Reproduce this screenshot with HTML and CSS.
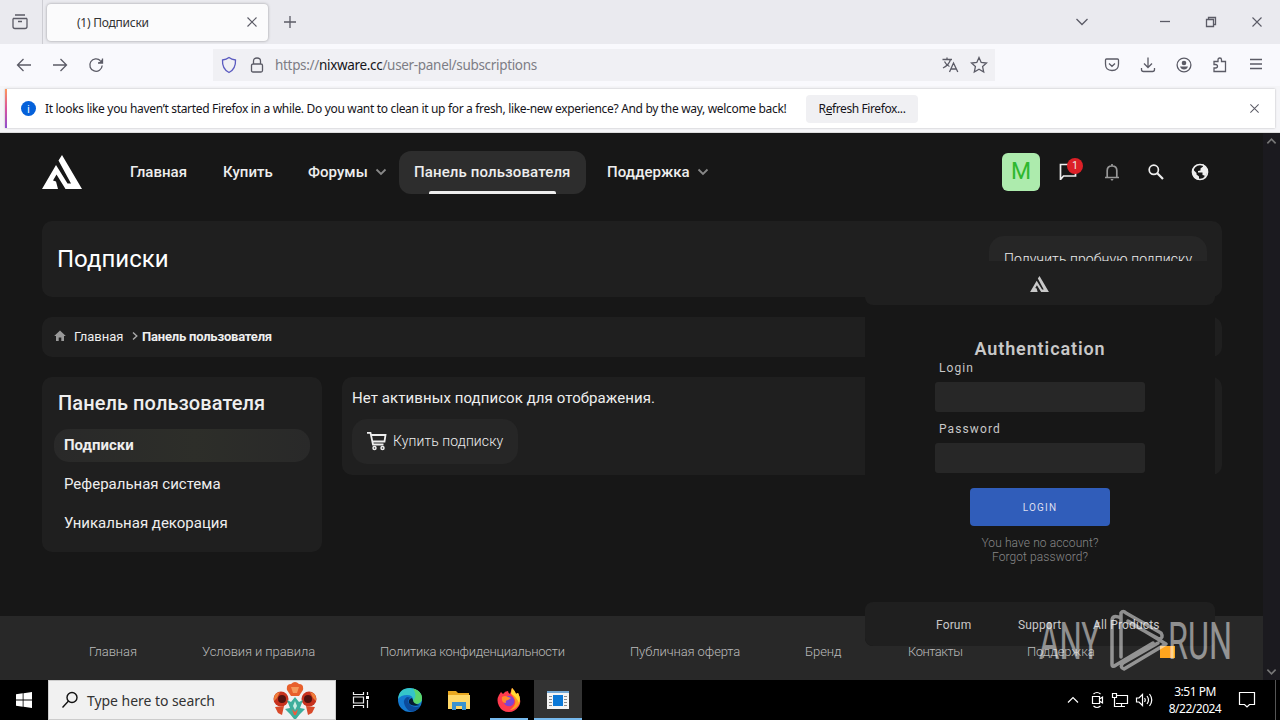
FILE: index.html
```html
<!DOCTYPE html>
<html lang="ru">
<head>
    <meta charset="UTF-8">
    <meta name="viewport" content="width=device-width, initial-scale=1.0">
    <title>(1) Подписки</title>
    <link rel="stylesheet" href="styles.css">
</head>
<body>
    <svg class="defs" width="0" height="0">
        <symbol id="logo" viewBox="0 0 40 34">
            <path fill="currentColor" d="M0 34L14 10L25.500 28.500H29L16.500 5.500L20 0L40 34H23.500L14.500 19.500L11 25.500L14 26.500L16 34Z"/>
        </symbol>
        <symbol id="chevron" viewBox="0 0 12 8">
            <path fill="none" stroke="currentColor" stroke-width="1.800" d="M1.500 1.500L6 6L10.500 1.500"/>
        </symbol>
        <symbol id="cross" viewBox="0 0 12 12">
            <path fill="none" stroke="currentColor" stroke-width="1.100" d="M1.500 1.500L10.500 10.500M10.500 1.500L1.500 10.500"/>
        </symbol>
    </svg>

    <!-- Browser -->
    <div class="tabbar">
        <div class="tab-view">
            <svg width="18" height="18" viewBox="0 0 18 18"><path d="M4 2H14M2 5.500H16M2 5.500V13.500Q2 15.500 4 15.500H14Q16 15.500 16 13.500V5.500M7 8.500H11"/></svg>
        </div>
        <div class="tab">
            <span class="tab-title">(1) Подписки</span>
            <svg width="12" height="12"><use href="#cross"/></svg>
        </div>
        <svg class="new-tab" width="14" height="14" viewBox="0 0 14 14"><path d="M7 1V13M1 7H13"/></svg>
        <div class="window-buttons">
            <svg class="tabs-list" width="14" height="8" viewBox="0 0 14 8"><path d="M1.500 1L7 6.500L12.500 1"/></svg>
            <svg width="12" height="12" viewBox="0 0 12 12"><path d="M1 5.500H11"/></svg>
            <svg width="12" height="12" viewBox="0 0 12 12"><path d="M1.500 3.500H8.500V10.500H1.500ZM3.500 3.500V1.500H10.500V8.500H8.500"/></svg>
            <svg width="12" height="12"><use href="#cross"/></svg>
        </div>
    </div>

    <div class="toolbar">
        <div class="nav-buttons">
            <svg width="18" height="16" viewBox="0 0 18 16"><path d="M16 8H2.500M8.500 2L2.500 8L8.500 14"/></svg>
            <svg width="18" height="16" viewBox="0 0 18 16"><path d="M2 8H15.500M9.500 2L15.500 8L9.500 14"/></svg>
            <svg width="18" height="16" viewBox="0 0 18 16"><path d="M15.200 8.500A6.200 6.200 0 1 1 13.500 3.800M15.500 1.500V6H11"/><path class="solid" d="M15.500 2V6H11.500Z"/></svg>
        </div>
        <div class="urlbar">
            <svg class="shield" width="16" height="18" viewBox="0 0 16 18"><path d="M8 1.500Q10.500 3.500 14.500 4Q15 13 8 16.500Q1 13 1.500 4Q5.500 3.500 8 1.500Z"/></svg>
            <svg class="lock" width="14" height="18" viewBox="0 0 14 18"><path d="M3.500 8V5Q3.500 2 7 2Q10.500 2 10.500 5V8M3 8H11Q12.500 8 12.500 9.500V14.500Q12.500 16 11 16H3Q1.500 16 1.500 14.500V9.500Q1.500 8 3 8Z"/></svg>
            <span class="url">https://<b>nixware.cc</b>/user-panel/subscriptions</span>
            <svg class="translate" width="17" height="16" viewBox="0 0 17 16"><path d="M0.500 2.500H10M5 0.500V2.500M8.500 2.500Q7 8 1 11M2.500 4.500Q4.500 8.500 7.500 9.500M7.500 15L11.500 6L15.800 15M9 12H14.500"/></svg>
            <svg width="18" height="18" viewBox="0 0 18 18"><path d="M9 1.500L11.200 6.400L16.500 7L12.600 10.600L13.700 16L9 13.300L4.300 16L5.400 10.600L1.500 7L6.800 6.400Z"/></svg>
        </div>
        <div class="tool-buttons">
            <svg width="16" height="16" viewBox="0 0 16 16"><path d="M2.500 2H13.500Q14.500 2 14.500 3V7Q14.500 13.500 8 13.500Q1.500 13.500 1.500 7V3Q1.500 2 2.500 2ZM5 6.500L8 9.300L11 6.500"/></svg>
            <svg width="16" height="16" viewBox="0 0 16 16"><path d="M8 0.500V10M4 6.500L8 10.500L12 6.500M1.500 11V12.500Q1.500 14.500 3.500 14.500H12.500Q14.500 14.500 14.500 12.500V11"/></svg>
            <svg width="16" height="16" viewBox="0 0 16 16"><circle cx="8" cy="8" r="6.900"/><circle class="solid" cx="8" cy="6" r="2.300"/><path class="solid" d="M4 9.500H12Q11 12.500 8 12.500Q5 12.500 4 9.500Z"/></svg>
            <svg width="16" height="16" viewBox="0 0 16 16"><path d="M2 14.500V11H3.500Q5.500 11 5.500 9.200Q5.500 7.500 3.500 7.500H2V4.500H6V2.800Q6 1 7.800 1Q9.500 1 9.500 2.800V4.500H13.500V14.500Z"/></svg>
            <svg width="16" height="16" viewBox="0 0 16 16"><path d="M2 2.500H14M2 7H14M2 11.500H14"/></svg>
        </div>
    </div>

    <div class="notice-wrap">
        <div class="notice">
            <span class="info">i</span>
            <span class="notice-text">It looks like you haven’t started Firefox in a while. Do you want to clean it up for a fresh, like-new experience? And by the way, welcome back!</span>
            <button class="refresh">R<u>e</u>fresh Firefox...</button>
            <svg class="notice-close" width="11" height="11"><use href="#cross"/></svg>
        </div>
    </div>

    <!-- Site -->
    <div class="viewport">
        <div class="page">
            <header class="header">
                <svg class="logo" width="40" height="34"><use href="#logo"/></svg>
                <nav class="menu">
                    <a class="menu-item home">Главная</a>
                    <a class="menu-item buy">Купить</a>
                    <a class="menu-item forums">Форумы <svg width="12" height="8"><use href="#chevron"/></svg></a>
                    <a class="menu-item panel active">Панель пользователя</a>
                    <a class="menu-item">Поддержка <svg width="12" height="8"><use href="#chevron"/></svg></a>
                </nav>
                <div class="user-tools">
                    <span class="avatar">M</span>
                    <span class="tool">
                        <svg width="20" height="20" viewBox="0 0 20 20"><path d="M2.500 18V2.500H17.500V14H5.500L2.500 17.500"/></svg>
                        <span class="badge">1</span>
                    </span>
                    <span class="tool dim"><svg width="18" height="20" viewBox="0 0 18 20"><path d="M2 15.500H16M4.200 15V8.500Q4.200 4 9 4Q13.800 4 13.800 8.500V15M9 4V2"/><path class="solid" d="M7.300 17H10.700L9 19Z"/></svg></span>
                    <span class="tool"><svg width="18" height="18" viewBox="0 0 18 18"><circle cx="6.800" cy="6.800" r="4.600"/><path d="M10.300 10.300L16 16" stroke-width="2.200"/></svg></span>
                    <span class="tool"><svg width="18" height="18" viewBox="0 0 18 18"><circle cx="9" cy="9" r="7.500"/><path class="solid" d="M1.500 6L5.500 10V11.500L8 13.500V17Q0.500 15.500 1.500 6ZM8.500 1L12 1.500V3.500L9.500 5.500V7.500L7 8V9.500H11.500V12L13.500 12.500V14.500Q18 9 15.500 5L12 1L7 1Z"/></svg></span>
                </div>
            </header>

            <div class="card title-card">
                <h1>Подписки</h1>
                <a class="button trial">Получить пробную подписку</a>
            </div>

            <div class="card crumbs">
                <svg width="12" height="12" viewBox="0 0 12 12"><path fill="#999" d="M6 0.500L11.800 6H10V11H7.300V7.500H4.700V11H2V6H0.200Z"/></svg>
                <span class="crumb-home">Главная</span>
                <svg width="6" height="8" viewBox="0 0 6 8"><path fill="none" stroke="#aaa" stroke-width="1.400" d="M1 0.500L4.800 4L1 7.500"/></svg>
                <b>Панель пользователя</b>
            </div>

            <div class="columns">
                <div class="card sidebar">
                    <h3>Панель пользователя</h3>
                    <a class="side-link current">Подписки</a>
                    <a class="side-link ref">Реферальная система</a>
                    <a class="side-link decor">Уникальная декорация</a>
                </div>
                <div class="card content">
                    <p>Нет активных подписок для отображения.</p>
                    <a class="button buy-button">
                        <svg width="20" height="20" viewBox="0 0 20 20"><path fill="none" stroke="#eee" stroke-width="1.800" d="M0 1.800H3.500L6 13.500H16.500M4.200 4H18.500L17.500 10.500H5.800"/><circle cx="7.500" cy="17" r="1.500" fill="none" stroke="#eee" stroke-width="1.500"/><circle cx="15.500" cy="17" r="1.500" fill="none" stroke="#eee" stroke-width="1.500"/></svg>
                        <span>Купить подписку</span>
                    </a>
                </div>
            </div>

            <footer class="footer">
                <a class="f1">Главная</a>
                <a class="f2">Условия и правила</a>
                <a class="f3">Политика конфиденциальности</a>
                <a class="f4">Публичная оферта</a>
                <a class="f5">Бренд</a>
                <a class="f6">Контакты</a>
                <a class="f7">Поддержка</a>
                <span class="rss"></span>
            </footer>
        </div>
        <div class="scrollbar">
            <svg class="up" width="11" height="8"><use href="#chevron"/></svg>
            <svg width="11" height="8"><use href="#chevron"/></svg>
        </div>
    </div>

    <!-- Taskbar -->
    <div class="taskbar">
        <div class="start"><svg width="16" height="16" viewBox="0 0 16 16"><path fill="#fff" d="M0 2.200L6.700 1.300V7.500H0ZM7.500 1.200L16 0V7.500H7.500ZM0 8.400H6.700V14.700L0 13.800ZM7.500 8.400H16V16L7.500 14.800Z"/></svg></div>
        <div class="search">
            <svg width="18" height="18" viewBox="0 0 18 18"><circle cx="11" cy="6.500" r="5" fill="none" stroke="#111" stroke-width="1.400"/><path stroke="#111" stroke-width="1.400" d="M7.500 10L1.500 16.500"/></svg>
            <span>Type here to search</span>
            <svg class="flower" width="46" height="38" viewBox="0 0 46 38">
                <path fill="#e8602c" d="M15 9Q14 3 19 3Q23-1 27 3Q32 3 31 9L27 15H19Z"/>
                <path fill="#f59a5b" d="M19 6H27L25 12H21Z"/>
                <circle cx="9" cy="18" r="7.500" fill="#c8321e"/><circle cx="37" cy="18" r="7.500" fill="#c8321e"/>
                <path fill="#ef7f3a" d="M2 20Q1 12 8 11L5 17ZM44 20Q45 12 38 11L41 17Z"/>
                <circle cx="10" cy="18" r="4" fill="#521310"/><circle cx="36" cy="18" r="4" fill="#521310"/>
                <path fill="#d94a2a" d="M3 26L12 25L10 34L6 32ZM43 26L34 25L36 34L40 32Z"/>
                <path fill="#3dae9c" d="M23 16L27 21L31 19L28 27L33 28L28 33L24 38H22L18 33L13 28L18 27L15 19L19 21Z"/>
                <path fill="#c9ede3" d="M23 20L25 25L23 29L21 25Z"/><path fill="#f05a3c" d="M20 28L23 31L26 28L24 34H22Z"/>
            </svg>
        </div>
        <div class="apps">
            <span class="app"><svg width="18" height="18" viewBox="0 0 18 18"><path fill="none" stroke="#eee" stroke-width="1.200" d="M1.500 1V3.500H11.500V1M1.500 17V14.500H11.500V17M1.500 6H11.500V12H1.500ZM15.500 1V4M15.500 9V17"/><path fill="#fff" d="M14 5H17V8H14Z"/></svg></span>
            <span class="app"><svg width="24" height="24" viewBox="0 0 24 24">
                <circle cx="12" cy="12" r="12" fill="#1479d0"/>
                <path fill="#35c5c9" d="M0 11Q1 0 12 0Q23 1 24 10Q24 16 17 16Q13 15 15 12Q15 7 9 7Q3 7 0 11Z"/>
                <path fill="#5bd66b" d="M15 0.500Q24 3 24 10Q24 16 17 16Q14 15 15 13Q20 8 15 0.500Z"/>
                <path fill="#0c4a9b" d="M9 9Q4 12 7 18Q10 24 15 23.500Q20 22 22 18Q17 20 13 17.500Q8 14 12 9.500Z"/>
                <path fill="#061b33" d="M14 10Q10 11 11 15Q14 19 22 17Q15 16 15 12Z"/>
            </svg></span>
            <span class="app"><svg width="22" height="20" viewBox="0 0 22 20"><path fill="#e9a820" d="M0 1H8L10 3H21V19H0Z"/><path fill="#ffd868" d="M0 5H22V19H0Z"/><path fill="#3b93cf" d="M4 12H18V20H14V16H8V20H4Z"/></svg></span>
            <span class="app running"><svg width="24" height="24" viewBox="0 0 24 24">
                <path fill="#ff3b4e" d="M2 7L4 4L6 6Q8 3 11 3Q11 5 13 6Q14 3 15 0Q18 3 19 6L21 5Q25 13 22 18Q18 24 12 24Q5 24 2 18Q-1 12 2 7Z"/>
                <path fill="#ff9a20" d="M15 0Q18 3 19 6L21 5Q25 13 21 18Q17 22 13 22Q21 16 17 10Q13 6 15 0Z"/>
                <path fill="#ffda35" d="M15 0Q18 3 19 6L21 5Q24 11 22 15Q19 8 14 6Z"/>
                <circle cx="12" cy="13" r="5.300" fill="#8044d2"/>
                <path fill="#ff8b2b" d="M5 9Q8 7 11 9L14 10L11 12Q8 12 9 15Q4 15 5 9Z"/>
            </svg></span>
            <span class="app running focused"><svg width="22" height="18" viewBox="0 0 22 18"><path fill="#f4f4f4" d="M0 0H22V18H0Z"/><path fill="#74a9d5" d="M0 0H22V2H0Z"/><path fill="#0a78d7" d="M6 4H16V15H6Z"/><path stroke="#888" d="M2 5.500H5M2 8.500H5M2 11.500H5M2 14.500H5M17 5.500H20M17 8.500H20M17 11.500H20M17 14.500H20"/></svg></span>
        </div>
        <div class="tray">
            <svg width="12" height="8" viewBox="0 0 12 8"><path d="M1 6.500L6 1.500L11 6.500"/></svg>
            <svg class="camera" width="14" height="18" viewBox="0 0 14 18"><path d="M2.500 3Q6 0 9.500 3M2.500 15Q6 18 9.500 15M1.500 5.500H8.500V12.500H1.500ZM8.500 8L11.500 6V12L8.500 10"/></svg>
            <svg width="18" height="16" viewBox="0 0 18 16"><path d="M5 3.500H16.500V11.500H5M10.500 11.500V14.500M6.500 14.500H14M1.500 1.500H5.500V5.500H1.500ZM3.500 5.500V14.500H6.500"/></svg>
            <svg width="18" height="16" viewBox="0 0 18 16"><path d="M1.500 6H4L7.500 2.500V13.500L4 10H1.500ZM9.500 6Q11 8 9.500 10M12 4Q15 8 12 12M14.500 2Q19 8 14.500 14"/></svg>
            <div class="clock"><span>3:51 PM</span><span>8/22/2024</span></div>
            <svg class="messages" width="18" height="18" viewBox="0 0 18 18"><path d="M1.500 1.500H16.500V13.500H11.500L9 16L6.500 13.500H1.500Z"/></svg>
            <span class="show-desktop"></span>
        </div>
    </div>

    <!-- Login window over the browser -->
    <div class="auth">
        <div class="auth-head"><svg width="19" height="16"><use href="#logo"/></svg></div>
        <div class="auth-body">
            <h2>Authentication</h2>
            <label>Login</label>
            <input type="text">
            <label>Password</label>
            <input type="password">
            <button>LOGIN</button>
            <a>You have no account?</a>
            <a>Forgot password?</a>
        </div>
        <div class="auth-foot"><a class="forum">Forum</a><a class="support">Support</a><a>All Products</a></div>
    </div>

    <svg class="watermark" width="210" height="70" viewBox="0 0 210 70">
        <text x="3" y="51" textLength="61" lengthAdjust="spacingAndGlyphs">ANY</text>
        <text x="132" y="51" textLength="64" lengthAdjust="spacingAndGlyphs">RUN</text>
        <path d="M85 49V5Q87 2 90 5L125 25Q128 30 123 31L92 14M85 10Q76 6 76 13V56Q76 60 80 57L117 35M92 13L130 36L88 61Q83 59 87 55L122 35"/>
    </svg>
</body>
</html>
```
FILE: styles.css
```css
* {
    box-sizing: border-box;
}
body {
    margin: 0;
    width: 1280px;
    height: 720px;
    overflow: hidden;
    display: flex;
    flex-direction: column;
    position: relative;
    background: #171717;
    font-family: Roboto, "Liberation Sans", sans-serif;
}
svg {
    display: block;
    flex: none;
}
.defs {
    position: absolute;
}
a, span {
    white-space: nowrap;
}

/* Browser */
.tabbar, .toolbar, .notice {
    font-family: "Noto Sans", sans-serif;
}
.tabbar svg, .toolbar svg {
    fill: none;
    stroke: #5b5b66;
    stroke-width: 1.3;
    color: #5b5b66;
}
.toolbar .solid {
    fill: #5b5b66;
    stroke: none;
}
.tabbar {
    height: 44px;
    flex: none;
    display: flex;
    align-items: center;
    background: #eaeaef;
}
.tab-view {
    width: 43px;
    height: 44px;
    padding: 13px 0 0 11px;
    border-right: 1px solid #cdcdd3;
}
.tab {
    width: 221px;
    height: 37px;
    margin-left: 4px;
    padding: 0 10px 0 30px;
    display: flex;
    align-items: center;
    justify-content: space-between;
    background: #fbfbfc;
    border-radius: 4px;
    box-shadow: 0 0 3px rgba(0, 0, 0, 0.35);
}
.tab-title {
    font-size: 12px;
    letter-spacing: -0.25px;
    color: #333;
}
.new-tab {
    margin-left: 15px;
}
.window-buttons {
    margin-left: auto;
    margin-right: 17px;
    display: flex;
    align-items: center;
    gap: 34px;
}
.window-buttons .tabs-list {
    margin-right: 36px;
}
.toolbar {
    height: 42px;
    flex: none;
    display: flex;
    align-items: center;
    background: #f9f9fd;
}
.nav-buttons {
    width: 213px;
    padding-left: 15px;
    display: flex;
    gap: 18px;
}
.urlbar {
    width: 782px;
    height: 32px;
    padding: 0 7px 0 8px;
    display: flex;
    align-items: center;
    background: #f0f0f4;
}
.urlbar .shield {
    stroke: #5b5bc0;
}
.lock {
    margin-left: 13px;
}
.url {
    margin-left: 11px;
    font-size: 13.5px;
    letter-spacing: -0.32px;
    color: #7d7d85;
}
.url b {
    font-weight: normal;
    color: #15141a;
}
.translate {
    margin-left: auto;
    margin-right: 11px;
}
.tool-buttons {
    margin-left: auto;
    margin-right: 16px;
    display: flex;
    gap: 20px;
}
.notice-wrap {
    height: 47px;
    flex: none;
    padding: 3px 5px 4px;
    background: #f5f5f8;
    border-bottom: 1px solid #ddd;
}
.notice {
    height: 39px;
    padding: 0 15px 0 14px;
    display: flex;
    align-items: center;
    background: #fff;
    border-left: 2px solid;
    border-image: linear-gradient(#ff9a56, #d9539f, #8a4fd0) 1;
    box-shadow: 0 0 2px rgba(0, 0, 0, 0.25);
    font-size: 12px;
    color: #15141a;
}
.info {
    width: 15px;
    height: 15px;
    border-radius: 50%;
    background: #0561da;
    color: #fff;
    font-size: 11px;
    line-height: 15px;
    text-align: center;
}
.notice-text {
    width: 761px;
    margin-left: 9px;
    letter-spacing: -0.325px;
}
.refresh {
    width: 112px;
    height: 28px;
    padding: 0;
    border: none;
    border-radius: 4px;
    background: #f0f0f3;
    font: 12px "Noto Sans", sans-serif;
    letter-spacing: -0.4px;
    color: #15141a;
}
.notice-close {
    margin-left: auto;
    color: #5b5b66;
}

/* Site */
.viewport {
    height: 547px;
    flex: none;
    display: flex;
}
.page {
    width: 1263px;
    display: flex;
    flex-direction: column;
    color: #eee;
}
.header {
    height: 88px;
    padding: 17px 41px 27px 42px;
    display: flex;
    align-items: center;
}
.logo {
    color: #fff;
}
.menu {
    margin-left: 33px;
    display: flex;
    gap: 6px;
}
.menu-item {
    height: 43px;
    padding: 0 15px;
    display: flex;
    align-items: center;
    gap: 7px;
    position: relative;
    border-radius: 12px;
    font-size: 15px;
    font-weight: 500;
    letter-spacing: 0.05px;
}
.menu-item svg {
    color: #888;
}
.home {
    width: 87px;
}
.buy {
    width: 79px;
}
.forums {
    width: 100px;
}
.panel {
    width: 187px;
    letter-spacing: 0.12px;
}
.active {
    background: #2d2d2d;
}
.active::after {
    content: "";
    position: absolute;
    left: 30px;
    right: 30px;
    bottom: 0;
    height: 3px;
    border-radius: 2px 2px 0 0;
    background: #eee;
}
.user-tools {
    margin-left: auto;
    display: flex;
    align-items: center;
}
.avatar {
    width: 38px;
    height: 38px;
    margin-right: 6px;
    border-radius: 6px;
    background: #adebad;
    color: #2eb82e;
    font-size: 23px;
    line-height: 38px;
    text-align: center;
}
.tool {
    width: 44px;
    height: 38px;
    display: flex;
    align-items: center;
    justify-content: center;
    position: relative;
}
.tool svg {
    fill: none;
    stroke: #eee;
    stroke-width: 1.7;
}
.tool .solid {
    fill: #eee;
    stroke: none;
}
.dim svg {
    stroke: #999;
}
.dim .solid {
    fill: #999;
}
.badge {
    position: absolute;
    left: 21px;
    top: 5px;
    width: 16px;
    height: 16px;
    border-radius: 8px;
    background: #dc2027;
    font-size: 10px;
    line-height: 16px;
    text-align: center;
}
.card {
    background: #1f1f1f;
    border-radius: 10px;
}
.title-card {
    width: 1180px;
    height: 76px;
    margin-left: 42px;
    padding: 15px;
    display: flex;
    justify-content: space-between;
}
h1 {
    margin: 0;
    font-size: 24px;
    font-weight: 400;
    line-height: 46px;
    color: #fff;
}
.button {
    height: 45px;
    padding: 0 15px;
    display: flex;
    align-items: center;
    background: #262626;
    border-radius: 15px;
    font-size: 14px;
    font-weight: 300;
}
.trial {
    width: 218px;
    letter-spacing: 0.1px;
}
.crumbs {
    width: 1180px;
    height: 40px;
    margin: 20px 0 0 42px;
    padding: 0 12px 2px;
    display: flex;
    align-items: center;
    font-size: 13px;
}
.crumb-home {
    width: 58px;
    margin-left: 8px;
}
.crumbs b {
    margin-left: 4px;
    letter-spacing: -0.2px;
}
.columns {
    margin: 20px 0 0 42px;
    display: flex;
    align-items: flex-start;
    gap: 20px;
}
.sidebar {
    width: 280px;
    height: 175px;
    padding: 12px;
    display: flex;
    flex-direction: column;
    gap: 6px;
}
h3 {
    margin: 0 0 6px 4px;
    font-size: 20px;
    font-weight: 500;
    line-height: 28px;
    letter-spacing: 0.08px;
}
.side-link {
    height: 33px;
    padding-left: 10px;
    border-radius: 15px;
    font-size: 15px;
    line-height: 32px;
}
.current {
    background: linear-gradient(90deg, #292929, #2d2e29 55%, #292929);
    font-weight: 700;
}
.content {
    width: 880px;
    height: 98px;
    padding: 10px;
}
.content p {
    margin: 0;
    font-size: 15px;
    line-height: 22px;
    letter-spacing: 0.08px;
}
.buy-button {
    width: 166px;
    margin-top: 10px;
    padding-bottom: 1px;
    gap: 6px;
    letter-spacing: 0.1px;
}
.footer {
    height: 64px;
    margin-top: auto;
    padding: 6px 0 0 89px;
    display: flex;
    align-items: center;
    gap: 65px;
    background: #282828;
    font-size: 13px;
    font-weight: 300;
    letter-spacing: -0.1px;
    color: #bbb;
}
.f1 {
    width: 48px;
}
.f2 {
    width: 113px;
}
.f3 {
    width: 185px;
    letter-spacing: -0.25px;
}
.f4 {
    width: 110px;
}
.f5 {
    width: 38px;
}
.f6 {
    width: 54px;
    letter-spacing: -0.5px;
}
.f7 {
    width: 68px;
}
.rss {
    width: 15px;
    height: 13px;
    background: #ffa51e;
}
.scrollbar {
    width: 17px;
    padding: 4px 3px;
    display: flex;
    flex-direction: column;
    justify-content: space-between;
    background: #1b1a1f;
    color: #777;
}
.up {
    transform: rotate(180deg);
}

/* Taskbar */
.taskbar {
    height: 40px;
    flex: none;
    display: flex;
    background: #000;
    font-family: "Noto Sans", sans-serif;
}
.start {
    width: 48px;
    padding: 12px 16px;
}
.search {
    width: 288px;
    padding: 0 10px 0 12px;
    display: flex;
    align-items: center;
    background: #f1f1f1;
    border: 1px solid #ccc;
    font-size: 14px;
    letter-spacing: -0.05px;
    color: #333;
}
.search span {
    margin-left: 8px;
}
.flower {
    width: 60px;
    margin-left: auto;
}
.apps {
    display: flex;
}
.app {
    width: 49px;
    height: 40px;
    display: flex;
    align-items: center;
    justify-content: center;
}
.running {
    border-bottom: 2px solid #76b9ed;
    padding-top: 2px;
    width: 38px;
    margin: 0 6px 0 7px;
}
.focused {
    width: 48px;
    margin: 0;
    background: #333;
}
.tray {
    margin-left: auto;
    display: flex;
    align-items: center;
    color: #fff;
}
.tray svg {
    fill: none;
    stroke: #fff;
    stroke-width: 1.2;
    margin-right: 6px;
}
.tray .camera {
    margin-left: 6px;
}
.clock {
    width: 74px;
    display: flex;
    flex-direction: column;
    align-items: center;
    font-size: 12px;
    line-height: 17px;
    letter-spacing: -0.5px;
}
.tray .clock {
    margin-left: -1px;
}
.tray .messages {
    margin: 0 19px 0 6px;
}
.show-desktop {
    width: 5px;
    height: 40px;
    border-left: 1px solid #555;
}

/* Login window */
.auth {
    position: absolute;
    left: 865px;
    top: 261px;
    width: 350px;
    height: 385px;
    display: flex;
    flex-direction: column;
    background: #171717;
    border-radius: 0 0 8px 8px;
    color: #c8c8c8;
}
.auth-head {
    height: 44px;
    padding: 15px 2px 0 0;
    display: flex;
    justify-content: center;
    background: #1f1f1f;
    border-radius: 0 0 8px 8px;
}
.auth-body {
    flex: 1;
    padding: 33px 70px 0;
    display: flex;
    flex-direction: column;
}
h2 {
    margin: 0;
    font-size: 18px;
    font-weight: 600;
    line-height: 21px;
    letter-spacing: 0.9px;
    text-align: center;
}
.auth label {
    padding-left: 4px;
    font-size: 12px;
    line-height: 18px;
    letter-spacing: 1.1px;
}
.auth input {
    height: 30px;
    flex: none;
    margin: 5px 0 8px;
    border: none;
    border-radius: 3px;
    background: #272727;
}
.auth button {
    width: 140px;
    height: 38px;
    flex: none;
    margin: 7px auto 10px;
    border: none;
    border-radius: 4px;
    background: #305dba;
    color: #dde;
    font: 10px Roboto, sans-serif;
    letter-spacing: 1.2px;
}
.auth-body a {
    font-size: 12px;
    font-weight: 300;
    line-height: 14px;
    letter-spacing: 0.1px;
    text-align: center;
    color: #888;
}
.auth-foot {
    height: 44px;
    padding: 2px 0 0 71px;
    display: flex;
    align-items: center;
    background: #1f1f1f;
    border-radius: 8px;
    font-size: 12px;
    letter-spacing: 0.15px;
}
.forum {
    width: 82px;
}
.support {
    width: 75px;
}
.watermark {
    position: absolute;
    left: 1036px;
    top: 608px;
    opacity: 0.5;
    fill: #fff;
    font: 400 52px Roboto, sans-serif;
}
.watermark path {
    fill: none;
    stroke: #fff;
    stroke-width: 3.5;
    stroke-linejoin: round;
    stroke-linecap: round;
}
```
